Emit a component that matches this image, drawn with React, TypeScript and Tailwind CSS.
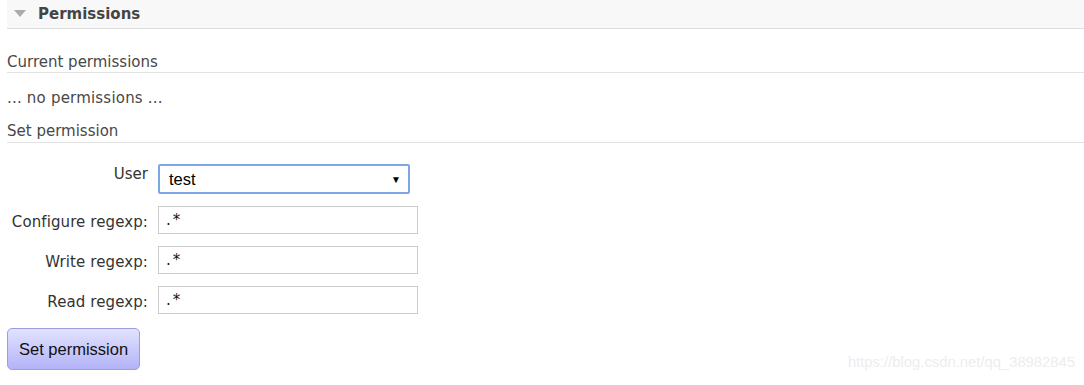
import React from "react";

const verdana = { fontFamily: '"DejaVu Sans", Verdana, sans-serif' };
const arial = { fontFamily: '"Liberation Sans", Arial, sans-serif' };

function Field({ label, value }: { label: string; value: string }) {
  return (
    <div className="flex gap-[10px]">
      <label className="w-[141px] shrink-0 pt-[7px] text-right text-[15px] leading-[18px] tracking-[0.1px] text-[#333]">
        {label}
      </label>
      <div className="flex h-[28px] w-[260px] items-center border border-[#ccc] bg-white pl-[7px] text-[15px] tracking-[2px] text-[#111]">
        {value}
      </div>
    </div>
  );
}

export default function App() {
  return (
    <div className="relative h-[385px] w-[1084px] overflow-hidden bg-white pl-[7px]" style={verdana}>
      <div className="flex h-[29px] items-center border-b border-[#ddd] bg-[#f8f8f8]">
        <span className="ml-[7px] mt-[-2px] h-0 w-0 border-x-[6px] border-t-[7px] border-x-transparent border-t-[#aaa]" />
        <h2 className="ml-[12px] text-[15px] font-bold leading-[28px] text-[#444]">Permissions</h2>
      </div>

      <h3 className="mt-[24px] border-b border-[#e2e2e2] pb-[1px] text-[15px] leading-[18px] text-[#484848]">
        Current permissions
      </h3>
      <p className="mt-[16px] text-[15px] leading-[18px] tracking-[0.2px] text-[#484848]">... no permissions ...</p>
      <h3 className="mt-[15px] border-b border-[#e2e2e2] pb-[2px] text-[15px] leading-[18px] text-[#484848]">
        Set permission
      </h3>

      <div className="mt-[21px] flex flex-col gap-[12px]">
        <div className="flex gap-[10px]">
          <label className="w-[141px] shrink-0 pt-[1px] text-right text-[15px] leading-[18px] text-[#333]">User</label>
          <div
            className="flex h-[30px] w-[252px] items-center justify-between rounded-[2px] border-2 border-[#7fa6e4] bg-white pl-[9px] pr-[7px] text-[16.5px] text-black"
            style={arial}
          >
            <span>test</span>
            <span className="text-[10px]">▼</span>
          </div>
        </div>
        <Field label="Configure regexp:" value=".*" />
        <Field label="Write regexp:" value=".*" />
        <Field label="Read regexp:" value=".*" />
      </div>

      <button
        className="mt-[14px] h-[42px] rounded-[5px] border border-[#9c9ce0] bg-gradient-to-b from-[#e2e2ff] to-[#b3b3f7] px-[11px] text-[16.5px] text-[#111]"
        style={arial}
      >
        Set permission
      </button>

      <span className="absolute bottom-[12px] right-[9px] text-[14.8px] text-[#ededed]" style={arial}>
        https://blog.csdn.net/qq_38982845
      </span>
    </div>
  );
}
